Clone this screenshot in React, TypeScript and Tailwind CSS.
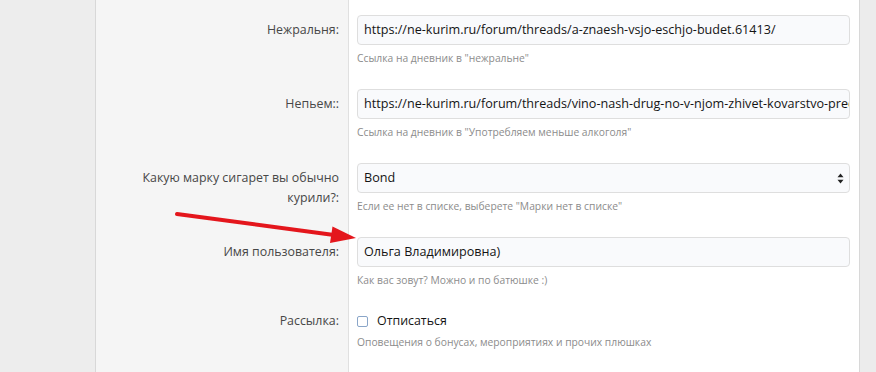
import React from "react";

const font = { fontFamily: '"Open Sans", "Noto Sans", Arial, sans-serif' };

function Row({
  label,
  children,
  hint,
  labelPt = "pt-[5px]",
}: {
  label: React.ReactNode;
  children: React.ReactNode;
  hint: string;
  labelPt?: string;
}) {
  return (
    <div className="flex">
      <div
        className={`w-[253px] shrink-0 bg-[#f5f5f5] border-r border-[#e0e0e0] text-right pr-[9px] ${labelPt} text-[12.4px] leading-[20px] text-[#474747]`}
      >
        {label}
      </div>
      <div className="flex-1 min-w-0 pl-[8px] pr-[9px]">
        {children}
        <div className="mt-[5px] h-[16px] text-[10.3px] leading-[16px] text-[#8c8c8c] whitespace-nowrap">
          {hint}
        </div>
        <div className="h-[23px]" />
      </div>
    </div>
  );
}

function Input({ value }: { value: string }) {
  return (
    <div className="h-[30px] border border-[#dedede] rounded-[4px] bg-[#f9fafc] px-[6px] flex items-center text-[12.6px] text-[#141414] overflow-hidden whitespace-nowrap">
      {value}
    </div>
  );
}

export default function App() {
  return (
    <div className="relative w-[876px] h-[372px] overflow-hidden bg-[#ececec] flex" style={font}>
      <div className="w-[95px] shrink-0 bg-[#ededed]" />
      <div className="w-[765px] shrink-0 border-l border-r border-[#d8d8d8] bg-white flex flex-col">
        <div className="flex h-[15px]">
          <div className="w-[253px] shrink-0 bg-[#f5f5f5] border-r border-[#e0e0e0]" />
          <div className="flex-1" />
        </div>
        <Row label="Нежральня:" hint={'Ссылка на дневник в "нежральне"'}>
          <Input value="https://ne-kurim.ru/forum/threads/a-znaesh-vsjo-eschjo-budet.61413/" />
        </Row>
        <Row label="Непьем::" hint={'Ссылка на дневник в "Употребляем меньше алкоголя"'}>
          <Input value="https://ne-kurim.ru/forum/threads/vino-nash-drug-no-v-njom-zhivet-kovarstvo-predatelja.61414/" />
        </Row>
        <Row
          label={
            <>
              Какую марку сигарет вы обычно
              <br />
              курили?:
            </>
          }
          hint={'Если ее нет в списке, выберете "Марки нет в списке"'}
        >
          <div className="h-[30px] border border-[#dedede] rounded-[4px] bg-[#f9fafc] pl-[6px] pr-[5px] flex items-center justify-between text-[12.6px] text-[#141414]">
            <span>Bond</span>
            <svg width="7" height="11" viewBox="0 0 7 11">
              <path d="M3.5 0.5 L6.5 4.2 L0.5 4.2 Z" fill="#222" />
              <path d="M3.5 10.5 L6.5 6.8 L0.5 6.8 Z" fill="#222" />
            </svg>
          </div>
        </Row>
        <Row label="Имя пользователя:" hint="Как вас зовут? Можно и по батюшке :)">
          <Input value="Ольга Владимировна)" />
        </Row>
        <div className="flex flex-1">
          <div className="w-[253px] shrink-0 bg-[#f5f5f5] border-r border-[#e0e0e0] text-right pr-[9px] text-[12.4px] leading-[20px] text-[#474747]">
            Рассылка:
          </div>
          <div className="flex-1 min-w-0 pl-[8px] pr-[9px]">
            <div className="flex items-center h-[20px]">
              <div className="w-[11px] h-[11px] border border-[#8aa6c9] rounded-[2px] bg-white" />
              <span className="ml-[9px] text-[12.4px] text-[#141414]">Отписаться</span>
            </div>
            <div className="mt-[3px] h-[16px] text-[10.3px] leading-[16px] text-[#8c8c8c] whitespace-nowrap">
              Оповещения о бонусах, мероприятиях и прочих плюшках
            </div>
          </div>
        </div>
      </div>
      <div className="flex-1 bg-[#ececec]" />
      <svg className="absolute left-0 top-0 pointer-events-none" width="876" height="372">
        <defs>
          <filter id="sh" x="-20%" y="-50%" width="140%" height="200%">
            <feGaussianBlur stdDeviation="0.6" />
          </filter>
        </defs>
        <g filter="url(#sh)">
          <line x1="177" y1="214" x2="334" y2="235" stroke="#e4161c" strokeWidth="4" strokeLinecap="round" />
          <path d="M356 238 L330 243 L332.5 226.5 Z" fill="#e4161c" />
        </g>
      </svg>
    </div>
  );
}
